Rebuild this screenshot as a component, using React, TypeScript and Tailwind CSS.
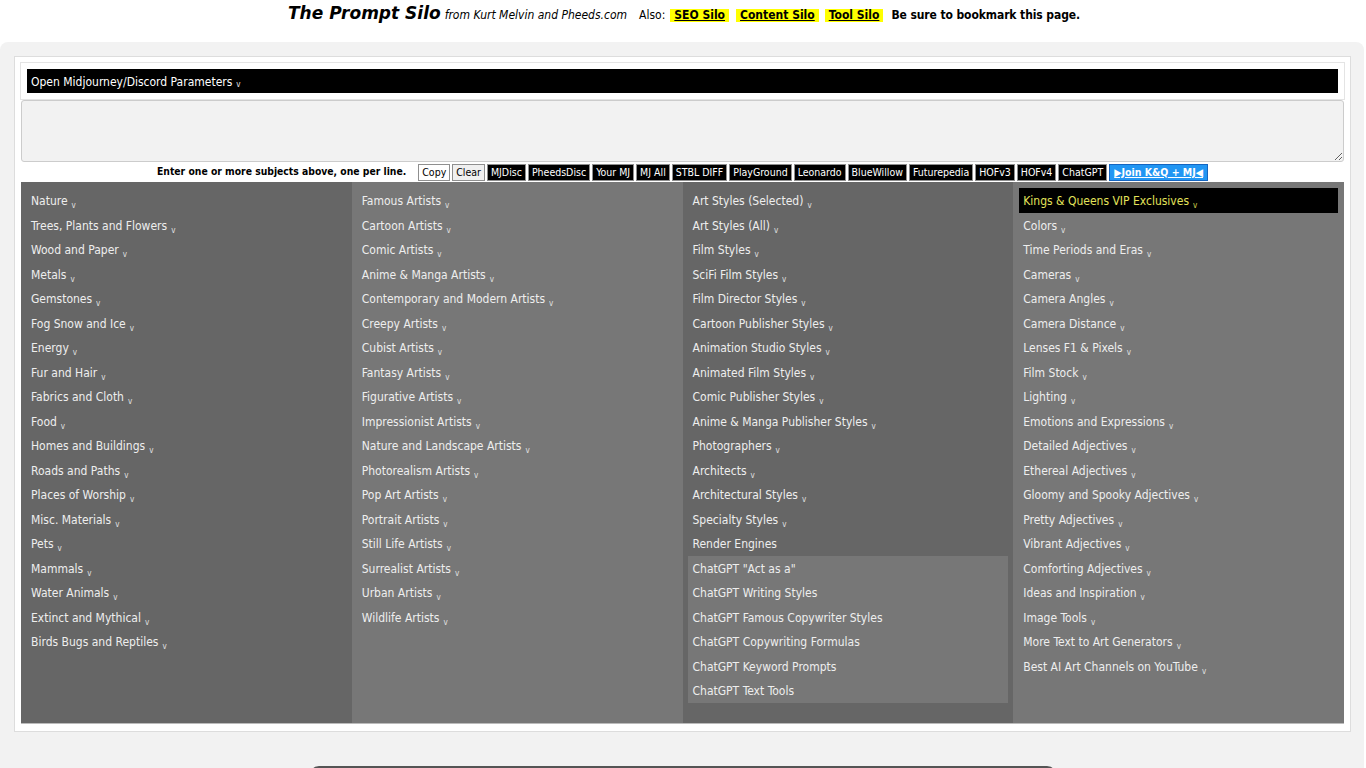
import React from "react";

const col1 = [
  "Nature",
  "Trees, Plants and Flowers",
  "Wood and Paper",
  "Metals",
  "Gemstones",
  "Fog Snow and Ice",
  "Energy",
  "Fur and Hair",
  "Fabrics and Cloth",
  "Food",
  "Homes and Buildings",
  "Roads and Paths",
  "Places of Worship",
  "Misc. Materials",
  "Pets",
  "Mammals",
  "Water Animals",
  "Extinct and Mythical",
  "Birds Bugs and Reptiles",
];

const col2 = [
  "Famous Artists",
  "Cartoon Artists",
  "Comic Artists",
  "Anime & Manga Artists",
  "Contemporary and Modern Artists",
  "Creepy Artists",
  "Cubist Artists",
  "Fantasy Artists",
  "Figurative Artists",
  "Impressionist Artists",
  "Nature and Landscape Artists",
  "Photorealism Artists",
  "Pop Art Artists",
  "Portrait Artists",
  "Still Life Artists",
  "Surrealist Artists",
  "Urban Artists",
  "Wildlife Artists",
];

const col3 = [
  "Art Styles (Selected)",
  "Art Styles (All)",
  "Film Styles",
  "SciFi Film Styles",
  "Film Director Styles",
  "Cartoon Publisher Styles",
  "Animation Studio Styles",
  "Animated Film Styles",
  "Comic Publisher Styles",
  "Anime & Manga Publisher Styles",
  "Photographers",
  "Architects",
  "Architectural Styles",
  "Specialty Styles",
];

const chatGpt = [
  'ChatGPT "Act as a"',
  "ChatGPT Writing Styles",
  "ChatGPT Famous Copywriter Styles",
  "ChatGPT Copywriting Formulas",
  "ChatGPT Keyword Prompts",
  "ChatGPT Text Tools",
];

const col4 = [
  "Colors",
  "Time Periods and Eras",
  "Cameras",
  "Camera Angles",
  "Camera Distance",
  "Lenses F1 & Pixels",
  "Film Stock",
  "Lighting",
  "Emotions and Expressions",
  "Detailed Adjectives",
  "Ethereal Adjectives",
  "Gloomy and Spooky Adjectives",
  "Pretty Adjectives",
  "Vibrant Adjectives",
  "Comforting Adjectives",
  "Ideas and Inspiration",
  "Image Tools",
  "More Text to Art Generators",
  "Best AI Art Channels on YouTube",
];

const darkButtons = [
  "MJDisc",
  "PheedsDisc",
  "Your MJ",
  "MJ All",
  "STBL DIFF",
  "PlayGround",
  "Leonardo",
  "BlueWillow",
  "Futurepedia",
  "HOFv3",
  "HOFv4",
  "ChatGPT",
];

function Caret() {
  return <span className="ml-[4px] inline-block translate-y-[3px] text-[8px] leading-none opacity-90">v</span>;
}

function Item({ label, caret = true, className = "px-[4px]" }: { label: string; caret?: boolean; className?: string }) {
  return (
    <div className={`${className} pt-[5px] pb-[3px] leading-[16.5px] whitespace-nowrap`}>
      {label}
      {caret && <Caret />}
    </div>
  );
}

const wide = { fontFamily: '"DejaVu Sans", Verdana, sans-serif' };

export default function App() {
  const bodyFont = { fontFamily: '"DejaVu Sans Condensed", "DejaVu Sans", Verdana, sans-serif' };
  return (
    <div className="min-h-[768px] bg-white text-black" style={bodyFont}>
      {/* site header */}
      <div className="flex h-[42px] items-baseline justify-center pt-[3px] pl-[2px] text-[12px]">
        <span className="text-[17px] font-bold italic leading-[20px]" style={wide}>
          The Prompt Silo
        </span>
        <span className="ml-[4px] italic">from Kurt Melvin and Pheeds.com</span>
        <span className="ml-[12px]">Also:</span>
        <a className="ml-[5px] bg-[#ffff00] px-[4px] font-bold leading-[13px] underline">SEO Silo</a>
        <a className="ml-[7px] bg-[#ffff00] px-[4px] font-bold leading-[13px] underline">Content Silo</a>
        <a className="ml-[6px] bg-[#ffff00] px-[4px] font-bold leading-[13px] underline">Tool Silo</a>
        <span className="ml-[8px] font-bold tracking-[-0.1px]">Be sure to bookmark this page.</span>
      </div>

      <div className="mr-[2px] rounded-t-[8px] bg-[#f2f2f2] pl-[14px] pr-[13px] pt-[14px] pb-[40px]">
        <div className="border border-[#dddddd] bg-white px-[6px] pt-[5px] pb-[7px]">
          {/* parameters bar */}
          <div className="-mx-[1px] border border-[#e4e4e4] p-[6px]">
            <div className="flex h-[24px] items-center bg-black px-[4px] pt-[1px] text-[12px] text-white">
              Open Midjourney/Discord Parameters
              <Caret />
            </div>
          </div>

          {/* subjects input */}
          <textarea className="block h-[62px] w-full resize-y rounded-[3px] border border-[#cccccc] bg-[#f2f2f2] p-1 outline-none" />

          {/* tool buttons */}
          <div className="flex h-[19px] items-center justify-center pt-[1px] text-[10.5px]">
            <span className="mr-[12px] text-[10.3px] font-bold">Enter one or more subjects above, one per line.</span>
            <button className="mr-[2px] h-[17px] border border-[#8f8f8f] bg-white px-[3px] leading-none">Copy</button>
            <button className="mr-[2px] h-[17px] border border-[#8f8f8f] bg-[#f0f0f0] px-[3px] leading-none">Clear</button>
            {darkButtons.map((b) => (
              <button
                key={b}
                className="mr-[2px] h-[17px] border border-[#8f8f8f] bg-black px-[3px] leading-none text-white"
              >
                {b}
              </button>
            ))}
            <button className="h-[17px] border border-[#1565c0] bg-[#2196f3] px-[4px] font-bold leading-none text-white underline">
              ▶Join K&amp;Q + MJ◀
            </button>
          </div>

          {/* category columns */}
          <div className="mt-[1px] grid grid-cols-4 border-b border-[#bbbbbb] text-[12px] text-[#eeeeee]">
            <div className="bg-[#666666] px-[6px] pt-[6px] pb-[10px]">
              {col1.map((c) => (
                <Item key={c} label={c} />
              ))}
            </div>
            <div className="bg-[#777777] px-[6px] pt-[6px] pb-[10px]">
              {col2.map((c) => (
                <Item key={c} label={c} />
              ))}
            </div>
            <div className="bg-[#666666] px-[5px] pt-[6px] pb-[20px]">
              <div className="pl-[1px]">
                {col3.map((c) => (
                  <Item key={c} label={c} />
                ))}
                <Item label="Render Engines" caret={false} />
              </div>
              <div className="bg-[#777777]">
                {chatGpt.map((c) => (
                  <Item key={c} label={c} caret={false} className="px-[5px]" />
                ))}
              </div>
            </div>
            <div className="bg-[#777777] px-[6px] pt-[6px] pb-[10px]">
              <div className="bg-black text-[#e3e35a]">
                <Item label="Kings & Queens VIP Exclusives" />
              </div>
              {col4.map((c) => (
                <Item key={c} label={c} />
              ))}
            </div>
          </div>
        </div>

        {/* subscribe banner */}
        <div className="mt-[34px] flex justify-center">
          <div className="h-[40px] w-[748px] rounded-t-[10px] border-2 border-[#555555] bg-[#f44336]" />
        </div>
      </div>
    </div>
  );
}
